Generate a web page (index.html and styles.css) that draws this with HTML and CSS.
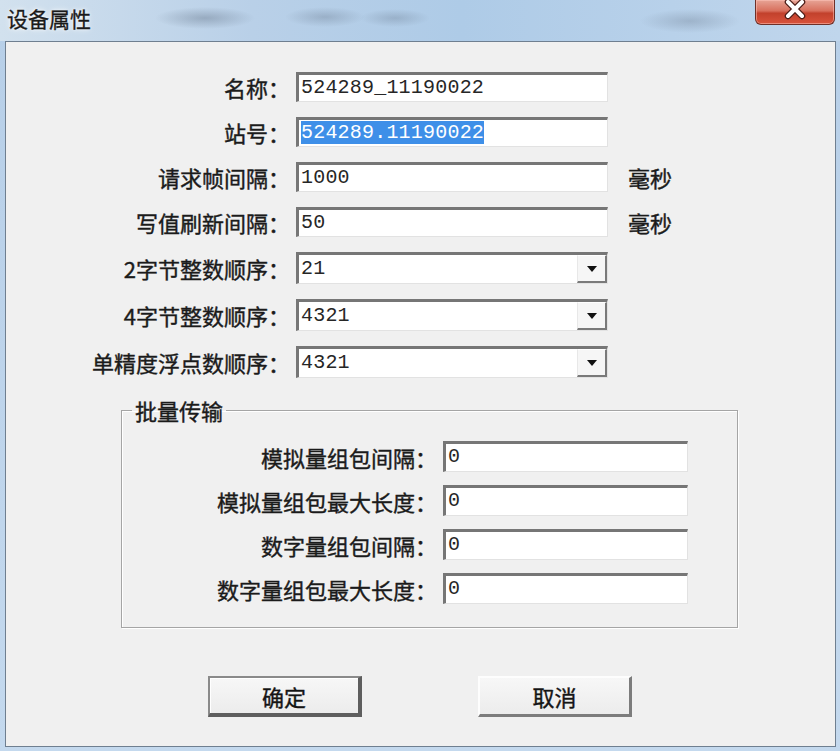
FILE: index.html
```html
<!DOCTYPE html>
<html lang="zh-CN">
<head>
  <meta charset="UTF-8">
  <title>设备属性</title>
  <link rel="stylesheet" href="styles.css">
</head>
<body>
  <div class="window">
    <div class="titlebar">
      <span class="title">设备属性</span>
      <span class="close">
        <svg width="80" height="25" viewBox="0 0 80 25">
          <path d="M33 3 L47 17 M47 3 L33 17" stroke="#4a1c16" stroke-width="6.5" stroke-linecap="round" fill="none" />
          <path d="M33 3 L47 17 M47 3 L33 17" stroke="#ffffff" stroke-width="4" stroke-linecap="round" fill="none" />
        </svg>
      </span>
    </div>
    <div class="frame">
      <div class="client">
        <div class="form main-form">
          <label>名称：</label>
          <div class="edit">524289_11190022</div>
          <span></span>

          <label>站号：</label>
          <div class="edit"><span class="sel">524289.11190022</span></div>
          <span></span>

          <label>请求帧间隔：</label>
          <div class="edit">1000</div>
          <span class="unit">毫秒</span>

          <label>写值刷新间隔：</label>
          <div class="edit">50</div>
          <span class="unit">毫秒</span>

          <label>2字节整数顺序：</label>
          <div class="edit combo"><span class="value">21</span><span class="drop"></span></div>
          <span></span>

          <label>4字节整数顺序：</label>
          <div class="edit combo"><span class="value">4321</span><span class="drop"></span></div>
          <span></span>

          <label>单精度浮点数顺序：</label>
          <div class="edit combo"><span class="value">4321</span><span class="drop"></span></div>
          <span></span>
        </div>

        <fieldset class="group">
          <legend>批量传输</legend>
          <div class="form sub-form">
            <label>模拟量组包间隔：</label>
            <div class="edit small">0</div>
            <label>模拟量组包最大长度：</label>
            <div class="edit small">0</div>
            <label>数字量组包间隔：</label>
            <div class="edit small">0</div>
            <label>数字量组包最大长度：</label>
            <div class="edit small">0</div>
          </div>
        </fieldset>

        <div class="buttons">
          <button class="btn btn-default" type="button">确定</button>
          <button class="btn" type="button">取消</button>
        </div>
      </div>
    </div>
  </div>
</body>
</html>
```

FILE: styles.css
```css
body {
  margin: 0;
  font-family: "Noto Sans CJK SC", "Noto Sans", sans-serif;
  color: #1b1b1b;
}

.window {
  width: 840px;
  height: 751px;
  display: flex;
  flex-direction: column;
  background: linear-gradient(to bottom, #b7cfe8, #c4d9ee);
}

/* barra de titulo com o fundo borrado do Aero */
.titlebar {
  height: 41px;
  flex: none;
  display: flex;
  justify-content: space-between;
  align-items: flex-start;
  background:
    radial-gradient(ellipse 50px 11px at 205px 18px, rgba(80, 95, 115, 0.35), transparent),
    radial-gradient(ellipse 40px 10px at 325px 17px, rgba(90, 105, 125, 0.3), transparent),
    radial-gradient(ellipse 35px 9px at 395px 18px, rgba(90, 105, 125, 0.28), transparent),
    radial-gradient(ellipse 50px 12px at 690px 21px, rgba(95, 110, 130, 0.3), transparent),
    linear-gradient(to right, #d2e1ee 0%, #b9d0e8 30%, #aecbe7 55%, #b8d1ea 80%, #c0d6ec 100%);
}

.title {
  margin: 5px 0 0 7px;
  font-size: 21px;
  line-height: 26px;
  color: #1a1a1a;
  -webkit-text-stroke: 0.3px #1a1a1a;
  text-shadow: 0 0 6px #fff, 0 0 3px #fff;
}

.close {
  width: 80px;
  height: 25px;
  margin-right: 5px;
  box-sizing: border-box;
  border: 1px solid #6e3028;
  border-top: none;
  border-radius: 0 0 6px 6px;
  background: linear-gradient(to bottom, #e7a496 0%, #d8705d 45%, #c2412c 55%, #d9533c 100%);
  box-shadow: inset 0 0 0 1px rgba(255, 200, 190, 0.5);
}

.close svg {
  display: block;
  margin: -1px 0 0 -1px;
}

.frame {
  flex: 1;
  padding: 0 4px 4px 5px;
  display: flex;
}

.client {
  flex: 1;
  border: 1px solid #6f7f90;
  background: #f0f0f0;
}

.form {
  display: grid;
  column-gap: 6px;
}

.main-form {
  grid-template-columns: 284px 312px auto;
  row-gap: 15px;
  padding-top: 30px;
}

.sub-form {
  grid-template-columns: 315px 245px;
  row-gap: 13px;
}

.form label,
.unit,
.group legend,
.btn {
  -webkit-text-stroke: 0.4px #1b1b1b;
}

.form label {
  justify-self: end;
  align-self: center;
  font-size: 22px;
  line-height: 26px;
  white-space: nowrap;
}

.unit {
  align-self: center;
  padding-left: 14px;
  font-size: 22px;
  line-height: 26px;
}

/* caixa de texto afundada */
.edit {
  height: 30px;
  box-sizing: border-box;
  background: #fff;
  border-top: 3px solid #767676;
  border-left: 3px solid #767676;
  border-right: 1px solid #e2e2e2;
  border-bottom: 1px solid #e2e2e2;
  padding-left: 2px;
  font-family: "Liberation Mono", monospace;
  font-size: 20px;
  letter-spacing: 0.2px;
  line-height: 26px;
  color: #262626;
  white-space: nowrap;
  overflow: hidden;
}

.edit.small {
  height: 31px;
}

.sel {
  background: #3e8fe8;
  color: #fff;
}

.combo {
  height: 32px;
  display: flex;
  padding-right: 0;
  line-height: 28px;
}

.combo .value {
  flex: 1;
}

.drop {
  width: 30px;
  height: 28px;
  box-sizing: border-box;
  background: #f6f6f6;
  border-right: 2px solid #7a7a7a;
  border-bottom: 2px solid #7a7a7a;
  border-top: 1px solid #fff;
  border-left: 1px solid #e8e8e8;
  display: flex;
  align-items: center;
  justify-content: center;
}

.drop::after {
  content: "";
  width: 0;
  height: 0;
  border-left: 5px solid transparent;
  border-right: 5px solid transparent;
  border-top: 6px solid #111;
}

.group {
  width: 617px;
  box-sizing: border-box;
  margin: 20px 0 0 115px;
  padding: 19px 0 23px 0;
  border: 1px solid #a5a5a5;
  box-shadow: inset 1px 1px #fff, 1px 1px #fff;
  min-width: 0;
}

.group legend {
  margin-left: 10px;
  padding: 0 3px;
  font-size: 22px;
  line-height: 24px;
}

.buttons {
  display: flex;
  margin: 48px 0 0 202px;
  gap: 116px;
}

.btn {
  width: 154px;
  height: 41px;
  box-sizing: border-box;
  margin: 0;
  padding: 0;
  font-family: "Noto Sans CJK SC", sans-serif;
  font-size: 22px;
  color: #141414;
  background: linear-gradient(to bottom, #f7f7f7, #ececec);
  border-top: 2px solid #fdfdfd;
  border-left: 2px solid #fdfdfd;
  border-right: 3px solid #7c7c7c;
  border-bottom: 3px solid #7c7c7c;
  cursor: pointer;
}

.btn-default {
  border-top: 2px solid #8a8a8a;
  border-left: 2px solid #8a8a8a;
  border-right: 4px solid #5e5e5e;
  border-bottom: 4px solid #5e5e5e;
  box-shadow: inset 1px 1px #fff;
}
```
